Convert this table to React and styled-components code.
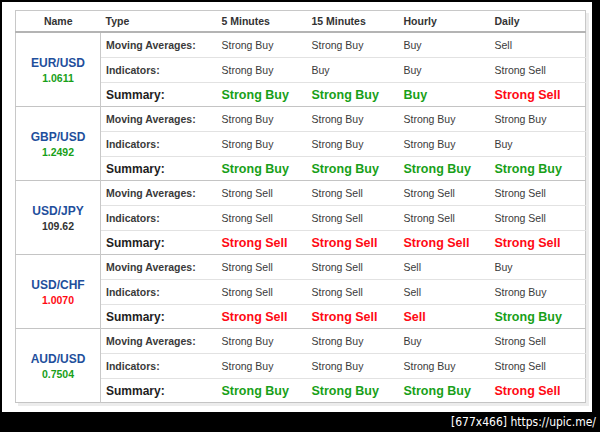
import React from 'react'
import styled, { createGlobalStyle } from 'styled-components'

const GlobalStyle = createGlobalStyle`
  html, body {
    margin: 0;
    padding: 0;
    background: #000;
  }
  body {
    font-family: "Liberation Sans", Arial, sans-serif;
  }
`

const COLORS = {
    buy: '#18a018',
    sell: '#ff0a14',
    flat: '#333333'
}

const pairs = [
    {
        name: 'EUR/USD', price: '1.0611', trend: 'buy',
        ma: ['Strong Buy', 'Strong Buy', 'Buy', 'Sell'],
        ind: ['Strong Buy', 'Buy', 'Buy', 'Strong Sell'],
        sum: ['Strong Buy', 'Strong Buy', 'Buy', 'Strong Sell']
    },
    {
        name: 'GBP/USD', price: '1.2492', trend: 'buy',
        ma: ['Strong Buy', 'Strong Buy', 'Strong Buy', 'Strong Buy'],
        ind: ['Strong Buy', 'Strong Buy', 'Strong Buy', 'Buy'],
        sum: ['Strong Buy', 'Strong Buy', 'Strong Buy', 'Strong Buy']
    },
    {
        name: 'USD/JPY', price: '109.62', trend: 'flat',
        ma: ['Strong Sell', 'Strong Sell', 'Strong Sell', 'Strong Sell'],
        ind: ['Strong Sell', 'Strong Sell', 'Strong Sell', 'Strong Sell'],
        sum: ['Strong Sell', 'Strong Sell', 'Strong Sell', 'Strong Sell']
    },
    {
        name: 'USD/CHF', price: '1.0070', trend: 'sell',
        ma: ['Strong Sell', 'Strong Sell', 'Sell', 'Buy'],
        ind: ['Strong Sell', 'Strong Sell', 'Sell', 'Strong Buy'],
        sum: ['Strong Sell', 'Strong Sell', 'Sell', 'Strong Buy']
    },
    {
        name: 'AUD/USD', price: '0.7504', trend: 'buy',
        ma: ['Strong Buy', 'Strong Buy', 'Buy', 'Strong Sell'],
        ind: ['Strong Buy', 'Strong Buy', 'Strong Buy', 'Strong Sell'],
        sum: ['Strong Buy', 'Strong Buy', 'Strong Buy', 'Strong Sell']
    }
]

const signalColor = (s) => (s.includes('Buy') ? COLORS.buy : COLORS.sell)

const App = () => {
    return (
        <>
            <GlobalStyle />
            <Page>
                <Sheet>
                    <Table>
                        <colgroup>
                            <col style={{ width: 85 }} />
                            <col style={{ width: 116 }} />
                            <col style={{ width: 90 }} />
                            <col style={{ width: 92 }} />
                            <col style={{ width: 91 }} />
                            <col />
                        </colgroup>
                        <thead>
                            <tr>
                                <HeadCell $center>Name</HeadCell>
                                <HeadCell>Type</HeadCell>
                                <HeadCell>5 Minutes</HeadCell>
                                <HeadCell>15 Minutes</HeadCell>
                                <HeadCell>Hourly</HeadCell>
                                <HeadCell>Daily</HeadCell>
                            </tr>
                        </thead>
                        {pairs.map((p) => (
                            <Group key={p.name}>
                                <tr>
                                    <NameCell rowSpan={3}>
                                        <Pair>{p.name}</Pair>
                                        <Price $color={COLORS[p.trend]}>{p.price}</Price>
                                    </NameCell>
                                    <TypeCell>Moving Averages:</TypeCell>
                                    {p.ma.map((v, i) => <Cell key={i}>{v}</Cell>)}
                                </tr>
                                <tr>
                                    <TypeCell>Indicators:</TypeCell>
                                    {p.ind.map((v, i) => <Cell key={i}>{v}</Cell>)}
                                </tr>
                                <SummaryRow>
                                    <SummaryLabel>Summary:</SummaryLabel>
                                    {p.sum.map((v, i) => (
                                        <SummaryCell key={i} $color={signalColor(v)}>{v}</SummaryCell>
                                    ))}
                                </SummaryRow>
                            </Group>
                        ))}
                    </Table>
                </Sheet>
                <Footer>[677x466] https://upic.me/</Footer>
            </Page>
        </>
    )
}

const Page = styled.div`
  width: 600px;
  height: 432px;
  background: #000;
  display: flex;
  flex-direction: column;
  overflow: hidden;
`

const Sheet = styled.div`
  margin: 2px 8px 0 2px;
  height: 410px;
  background: #fff;
  padding: 8px 6px 0 13px;
  box-sizing: border-box;
`

const Table = styled.table`
  width: 571px;
  border-collapse: collapse;
  table-layout: fixed;
  border: 1px solid #c8c8c8;
  box-shadow: 3px 3px 0 #ececec;
  color: #333;
`

const HeadCell = styled.th`
  height: 20px;
  padding: 0 0 0 ${(p) => (p.$center ? '0' : '5px')};
  text-align: ${(p) => (p.$center ? 'center' : 'left')};
  font-size: 10.5px;
  font-weight: bold;
  color: #333;
  border-bottom: 2px solid #b4b4b4;
`

const Group = styled.tbody`
  border-bottom: 1px solid #c4c4c4;
  & tr + tr td {
    border-top: 1px solid #e2e2e2;
  }
`

const NameCell = styled.td`
  text-align: center;
  vertical-align: middle;
  border-right: 1px solid #c8c8c8;
  padding: 2px 0 0;
`

const Pair = styled.div`
  font-size: 12px;
  font-weight: bold;
  color: #1f4f9c;
  line-height: 15px;
`

const Price = styled.div`
  font-size: 10.5px;
  font-weight: bold;
  color: ${(p) => p.$color};
  line-height: 15px;
`

const TypeCell = styled.td`
  height: 24px;
  padding: 0 0 0 5px;
  font-size: 10.5px;
  font-weight: bold;
  color: #3a3a3a;
  white-space: nowrap;
`

const Cell = styled.td`
  padding: 0 0 0 5px;
  font-size: 10.5px;
  color: #3a3a3a;
  white-space: nowrap;
`

const SummaryRow = styled.tr`
  height: 24px;
`

const SummaryLabel = styled.td`
  padding: 1px 0 0 5px;
  font-size: 12px;
  font-weight: bold;
  color: #1e1e1e;
`

const SummaryCell = styled.td`
  padding: 1px 0 0 5px;
  font-size: 12.5px;
  font-weight: bold;
  color: ${(p) => p.$color};
  white-space: nowrap;
`

const Footer = styled.div`
  flex: 1;
  display: flex;
  align-items: center;
  justify-content: flex-end;
  padding-right: 4px;
  color: #fff;
  font-family: "DejaVu Sans Condensed", "Liberation Sans", sans-serif;
  font-size: 12px;
`

export default App
